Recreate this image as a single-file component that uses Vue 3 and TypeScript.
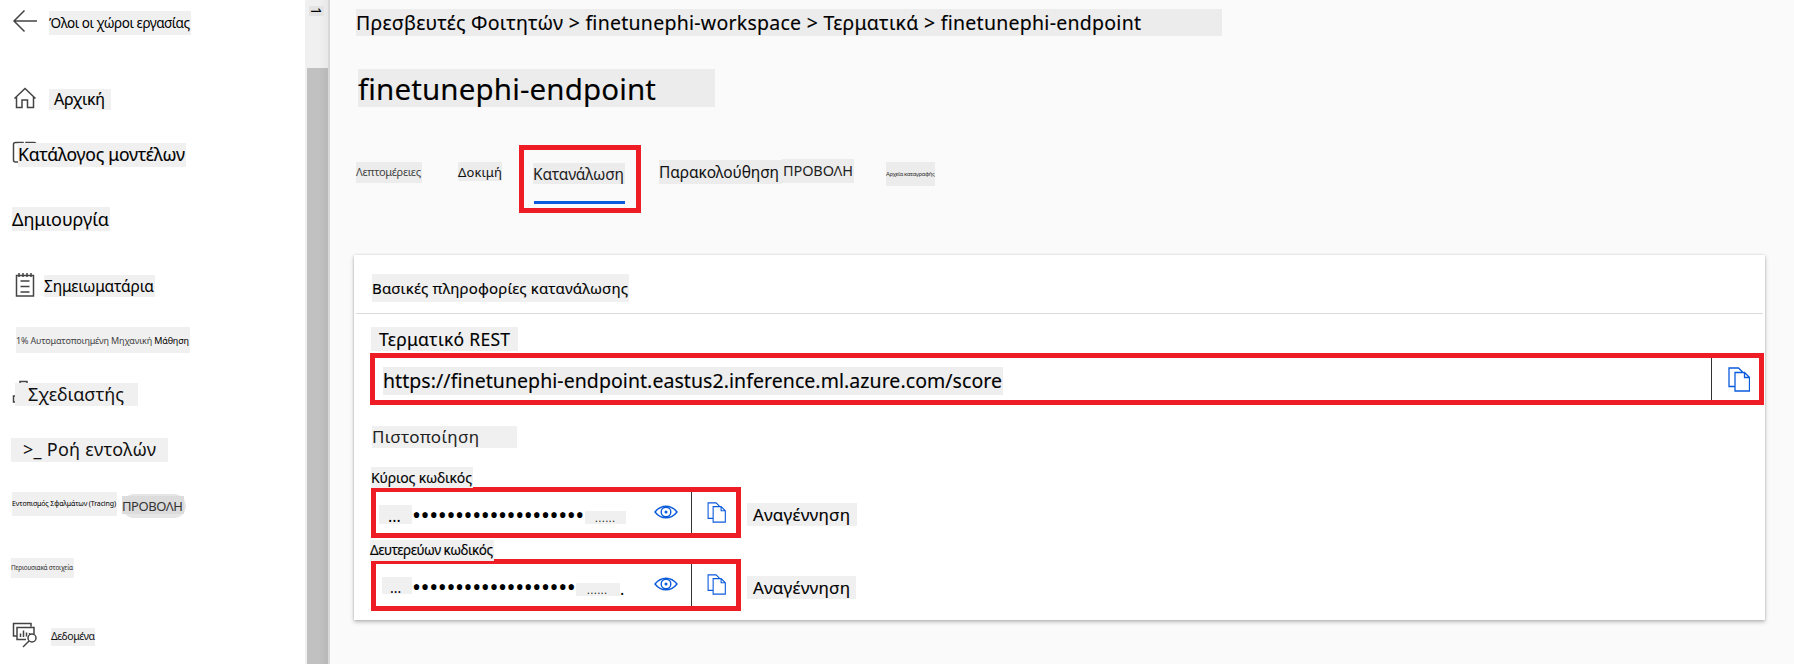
<script setup lang="ts">
import type { Directive } from 'vue'

// Spreads a line of text evenly over the given width in pixels.
const vFit: Directive<HTMLElement, number> = {
  mounted(el, { value }) {
    const natural = el.getBoundingClientRect().width
    const count = Array.from(el.textContent ?? '').length
    el.style.letterSpacing = `${(value - natural) / Math.max(count - 1, 1)}px`
  },
}

const mask = '•'.repeat(21)

interface Key {
  id: string
  label: string
  width: number
  regenWidth: number
}

const keys: Key[] = [
  { id: 'primary', label: 'Κύριος κωδικός', width: 101, regenWidth: 97 },
  { id: 'secondary', label: 'Δευτερεύων κωδικός', width: 123, regenWidth: 97 },
]
</script>

<template>
  <div class="app">
    <nav class="sidebar">
      <div class="row">
        <svg class="icon back" viewBox="0 0 26 24"><path d="M12.500 1.500 2 12l10.500 10.500M2 12h23" /></svg>
        <span class="tag t-all"><span v-fit="141">Όλοι οι χώροι εργασίας</span></span>
      </div>
      <div class="row">
        <svg class="icon home" viewBox="0 0 24 22"><path d="M1.500 11.500 12 1.500l10.500 10M3.500 10v10.500h5.500v-7.500h5.500v7.500h6V10" /></svg>
        <span class="tag t-home"><span v-fit="51">Αρχική</span></span>
      </div>
      <div class="row">
        <svg class="icon catalog" viewBox="0 0 26 24"><path d="M6 21H3.500Q1.500 21 1.500 19V3.500Q1.500 1.500 3.500 1.500H11V12M14 12V1.500H22Q24 1.500 24 3.500" /></svg>
        <span class="tag t-catalog"><span v-fit="167">Κατάλογος μοντέλων</span></span>
      </div>
      <div class="row"><span class="tag t-create"><span v-fit="97">Δημιουργία</span></span></div>
      <div class="row">
        <svg class="icon notebook" viewBox="0 0 20 26"><path d="M1.500 3.500h17v20.500h-17zM4 1v4M8 1v4M12 1v4M16 1v4M5.500 9h9M5.500 14.500h9M5.500 20h9" /></svg>
        <span class="tag t-notebook"><span v-fit="110">Σημειωματάρια</span></span>
      </div>
      <div class="row">
        <span class="tag t-automl"><span v-fit="173">1% Αυτοματοποιημένη Μηχανική <b>Μάθηση</b></span></span>
      </div>
      <div class="row">
        <svg class="icon designer" viewBox="0 0 26 26"><path d="M8 4V1.500h7V4M4 16H1.500v6H4" /></svg>
        <span class="tag t-designer"><span v-fit="96">Σχεδιαστής</span></span>
      </div>
      <div class="row"><span class="tag t-prompt"><span v-fit="133">&gt;_ Ροή εντολών</span></span></div>
      <div class="row">
        <span class="tag t-tracing"><span v-fit="104">Εντοπισμός Σφαλμάτων (Tracing)</span></span>
        <span class="pill"><span class="tag t-preview"><span v-fit="61">ΠΡΟΒΟΛΗ</span></span></span>
      </div>
      <div class="row"><span class="tag t-assets"><span v-fit="62">Περιουσιακά στοιχεία</span></span></div>
      <div class="row">
        <svg class="icon data" viewBox="0 0 26 26"><path d="M14 17.500H5V5.500h17V12M4.500 14H1.500V1.500h17.500v3M8.500 15v-3.500M11.500 15V8.500M14.500 14.500V10.500M17.500 12V11" /><circle cx="20" cy="16" r="4" /><path d="M17 19l-6 6" /></svg>
        <span class="tag t-data"><span v-fit="44">Δεδομένα</span></span>
      </div>
    </nav>

    <div class="scroll">
      <span class="scroll-top"><span>1</span></span>
      <div class="thumb"></div>
    </div>

    <main class="main">
      <div class="tag crumbs"><span v-fit="785">Πρεσβευτές Φοιτητών &gt; finetunephi-workspace &gt; Τερματικά &gt; finetunephi-endpoint</span></div>
      <h1 class="tag title"><span v-fit="298">finetunephi-endpoint</span></h1>

      <div class="tabs">
        <span class="tag tab-details"><span v-fit="65">Λεπτομέρειες</span></span>
        <span class="tag tab-test"><span v-fit="44">Δοκιμή</span></span>
        <div class="tab-active">
          <span class="tag tab-consume"><span v-fit="91">Κατανάλωση</span></span>
          <i class="underline"></i>
        </div>
        <span class="tag tab-monitor"><span v-fit="120">Παρακολούθηση</span></span>
        <span class="tag tab-preview"><span v-fit="70">ΠΡΟΒΟΛΗ</span></span>
        <span class="tag tab-logs"><span v-fit="49">Αρχεία καταγραφής</span></span>
      </div>

      <section class="card">
        <header class="card-head"><h2 class="tag head-text"><span v-fit="256">Βασικές πληροφορίες κατανάλωσης</span></h2></header>
        <div class="tag rest-label"><span v-fit="131">Τερματικό REST</span></div>
        <div class="field url-field">
          <span class="tag url"><span v-fit="619">https://finetunephi-endpoint.eastus2.inference.ml.azure.com/score</span></span>
          <span class="copy-cell">
            <svg class="copy" viewBox="0 0 22 25"><path d="M6.500 19.500H1V1h9.500l4 4M7 5.500h9.500l5 5V24H7zM16.500 5.500v5h5" /></svg>
          </span>
        </div>
        <div class="tag auth"><span v-fit="107">Πιστοποίηση</span></div>

        <div v-for="k in keys" :key="k.id" class="key" :class="k.id">
          <div class="tag key-label"><span v-fit="k.width">{{ k.label }}</span></div>
          <div class="key-row">
            <div class="field key-field">
              <span class="tag lead">...</span>
              <span class="dots"><span v-fit="181">{{ mask }}</span></span>
              <span class="tag trail"><span v-fit="20">......</span></span>
              <span class="stop"><template v-if="k.id === 'secondary'">.</template></span>
              <svg class="eye" viewBox="0 0 24 14"><path d="M1 7Q5.500 1.200 12 1.200T23 7Q18.500 12.800 12 12.800T1 7z" /><circle cx="12" cy="7" r="4.800" /><circle class="pupil" cx="12" cy="7" r="1.500" /></svg>
              <span class="copy-cell">
                <svg class="copy" viewBox="0 0 22 25"><path d="M6.500 19.500H1V1h9.500l4 4M7 5.500h9.500l5 5V24H7zM16.500 5.500v5h5" /></svg>
              </span>
            </div>
            <span class="tag regen"><span v-fit="k.regenWidth">Αναγέννηση</span></span>
          </div>
        </div>
      </section>
    </main>
  </div>
</template>

<style>
body {
  margin: 0;
  overflow: hidden;
}
</style>

<style scoped>
* {
  box-sizing: border-box;
}
.app {
  display: flex;
  width: 1794px;
  height: 664px;
  overflow: hidden;
  background: #fff;
  color: #000;
  font-family: 'Noto Sans', 'Open Sans', sans-serif;
}

/* --w/--h: box, --p: text inset, --fs: font size, --b: baseline inside the box */
.tag {
  --p: 0px;
  display: block;
  flex: none;
  width: var(--w);
  height: var(--h);
  margin: 0;
  padding-left: var(--p);
  background: #f0f0f0;
  font-size: var(--fs);
  font-weight: 400;
  line-height: calc((var(--b) - 0.388 * var(--fs)) * 2);
  white-space: nowrap;
}
.tag > span {
  display: inline-block;
}
.crumbs,
.title,
.url,
.t-home,
.t-catalog,
.rest-label,
.regen,
.key-label,
.head-text {
  -webkit-text-stroke: 0.12px currentColor;
}

/* sidebar */
.sidebar {
  flex: none;
  display: grid;
  grid-template-rows: 70px 55px 65px 65px 55px 60px 55px 55px 65px 65px 54px;
  width: 305px;
  height: 664px;
}
.row {
  display: flex;
  align-items: flex-start;
}
.icon {
  flex: none;
  fill: none;
  stroke: #444;
  stroke-width: 1.5;
}
.back { width: 26px; height: 24px; margin: 9px 0 0 12px; }
.home { width: 24px; height: 22px; margin: 17px 0 0 13px; }
.catalog { width: 26px; height: 24px; margin: 16px -21px 0 12px; }
.notebook { width: 20px; height: 26px; margin: 17px 0 0 15px; }
.designer { width: 26px; height: 26px; margin: 10px -23px 0 12px; }
.data { width: 26px; height: 26px; margin: 12px 0 0 12px; }

.t-all { --w: 142px; --h: 24px; --fs: 13.500px; --b: 18px; margin: 11px 0 0 11px; }
.t-home { --w: 62px; --h: 21px; --fs: 16px; --b: 17px; --p: 5px; margin: 19px 0 0 12px; }
.t-catalog { --w: 168px; --h: 24px; --fs: 17.500px; --b: 18.500px; position: relative; margin: 18px 0 0 1px; }
.t-create { --w: 98px; --h: 24px; --fs: 18px; --b: 19px; margin: 17px 0 0 12px; }
.t-notebook { --w: 111px; --h: 22px; --fs: 15.500px; --b: 18px; margin: 20px 0 0 9px; }
.t-automl { --w: 174px; --h: 26px; --fs: 9px; --b: 17px; margin: 17px 0 0 16px; color: #444; }
.t-automl b { color: #000; font-weight: 400; }
.t-designer { --w: 123px; --h: 23px; --fs: 18px; --b: 18.500px; --p: 13px; position: relative; margin: 13px 0 0; color: #111; }
.t-prompt { --w: 157px; --h: 24px; --fs: 18px; --b: 18.500px; --p: 12px; margin: 13px 0 0 11px; color: #111; }
.t-tracing { --w: 105px; --h: 24px; --fs: 7px; --b: 15px; margin: 12px 0 0 12px; }
.pill { flex: none; width: 64px; height: 24px; margin: 14px 0 0 5px; padding-top: 2px; border-radius: 12px; background: #e6e6e6; }
.t-preview { --w: 62px; --h: 18px; --fs: 13px; --b: 16px; background: #dcdcdc; color: #333; }
.t-assets { --w: 63px; --h: 20px; --fs: 6.500px; --b: 12.500px; margin: 13px 0 0 11px; color: #333; }
.t-data { --w: 44px; --h: 18px; --fs: 10.500px; --b: 13px; margin: 18px 0 0 13px; color: #111; }

/* scrollbar */
.scroll {
  flex: none;
  display: flex;
  flex-direction: column;
  width: 25px;
  height: 664px;
  padding: 6px 0 0 2px;
  border-right: 2px solid #d8d8d8;
  background: linear-gradient(to right, #f0f0f0 60%, #e8e8e8);
}
.scroll-top {
  display: flex;
  justify-content: center;
  align-items: center;
  width: 15px;
  height: 10px;
  margin: 0 0 52px 2px;
  background: #e3e3e3;
  font-size: 14px;
  line-height: 10px;
}
.scroll-top span {
  transform: rotate(90deg);
}
.thumb {
  flex: 1;
  background: linear-gradient(to right, #c1c1c1 60%, #b8b8b8);
}

/* main */
.main {
  flex: none;
  display: flex;
  flex-direction: column;
  width: 1464px;
  height: 664px;
  padding-left: 24px;
  background: #fafafa;
}
.main > .tag,
.tabs .tag {
  background: #ececec;
}
.crumbs { --w: 866px; --h: 27px; --fs: 19.500px; --b: 21.500px; margin: 9px 0 0 2px; }
.main > .title { --w: 357px; --h: 38px; --fs: 29.500px; --b: 31px; margin: 33px 0 0 4px; }

.tabs {
  display: flex;
  align-items: flex-start;
  height: 68px;
  margin: 38px 0 0 2px;
}
.tab-details { --w: 66px; --h: 21px; --fs: 11px; --b: 14px; margin-top: 17px; color: #444; }
.tab-test { --w: 44px; --h: 19px; --fs: 13px; --b: 15.500px; margin: 17px 0 0 36px; color: #111; }
.tab-active {
  width: 122px;
  height: 68px;
  margin-left: 17px;
  padding: 13px 0 0 9px;
  border: 5px solid #ee1c24;
}
.tab-consume { --w: 92px; --h: 21px; --fs: 15.500px; --b: 17.500px; color: #222; }
.underline {
  display: block;
  width: 91px;
  height: 3px;
  margin: 17px 0 0 1px;
  background: #0a5bdc;
}
.tab-monitor { --w: 123px; --h: 24px; --fs: 15.500px; --b: 19px; margin: 15px 0 0 18px; color: #111; }
.tab-preview { --w: 72px; --h: 24px; --fs: 14.500px; --b: 17.500px; --p: 1px; margin-top: 14px; color: #222; }
.tab-logs { --w: 49px; --h: 24px; --fs: 6px; --b: 14.500px; margin: 17px 0 0 32px; color: #333; }

.card {
  width: 1411px;
  height: 365px;
  margin-top: 42px;
  background: #fff;
  box-shadow: 0 2px 4px rgba(0, 0, 0, 0.26), 0 0 2px rgba(0, 0, 0, 0.14);
}
.card-head {
  height: 59px;
  margin: 0 2px;
  padding: 19px 0 0 16px;
  border-bottom: 1px solid #dadada;
}
.head-text { --w: 257px; --h: 28px; --fs: 15px; --b: 20px; }
.rest-label { --w: 147px; --h: 24px; --fs: 17.500px; --b: 19.500px; --p: 8px; margin: 13px 0 0 17px; }
.field {
  display: flex;
  align-items: flex-start;
  border: 5px solid #ee1c24;
  background: #fff;
}
.url-field {
  width: 1394px;
  height: 52px;
  margin: 2px 0 0 16px;
}
.url { --w: 620px; --h: 28px; --fs: 19.500px; --b: 21.500px; margin: 9px 0 0 8px; background: #eee; }
.copy-cell {
  flex: none;
  align-self: stretch;
  margin-left: auto;
  border-left: 1px solid #333;
}
.copy {
  display: block;
  fill: none;
  stroke: #0a5bdc;
  stroke-width: 1.3;
}
.url-field .copy-cell { width: 48px; padding: 9px 0 0 16px; }
.url-field .copy { width: 22px; height: 25px; }
.auth { --w: 145px; --h: 22px; --fs: 17px; --b: 18px; margin: 21px 0 0 18px; color: #222; }

.key {
  height: 72px;
  margin-left: 17px;
}
.key-label { position: relative; --h: 21px; --fs: 14px; --b: 16px; }
.key-row { display: flex; align-items: flex-start; }
.key-field { width: 370px; height: 52px; }
.primary { margin-top: 19px; }
.primary .key-label { --w: 102px; }
.primary .key-row { margin-top: -1px; }
.primary .key-field { height: 51px; }
.secondary { margin-top: 1px; }
.secondary .key-label { --w: 124px; --fs: 13.500px; margin-left: -1px; }
.secondary .key-row { margin-top: -2px; }

.lead { --w: 33px; --h: 19px; --fs: 16px; --b: 18px; --p: 9px; margin: 13px 0 0 3px; }
.secondary .lead { --w: 30px; --h: 17px; --fs: 14px; --b: 16.500px; --p: 8px; margin-left: 6px; }
.dots {
  flex: none;
  width: 173px;
  height: 41px;
  overflow: hidden;
  font-size: 24px;
  line-height: 46px;
  white-space: nowrap;
}
.secondary .dots { width: 164px; }
.trail { --w: 41px; --h: 13px; --fs: 10px; --b: 11.500px; --p: 10px; margin-top: 19px; color: #111; }
.secondary .trail { --w: 44px; --p: 11px; }
.stop {
  flex: none;
  width: 8px;
  font-size: 16px;
  line-height: 50px;
}
.eye {
  flex: none;
  width: 24px;
  height: 14px;
  margin: 13px 0 0 20px;
  fill: none;
  stroke: #0a5bdc;
  stroke-width: 1.4;
}
.secondary .eye { margin-left: 26px; }
.pupil { fill: #0a5bdc; stroke: none; }
.key-field .copy-cell { width: 45px; padding: 10px 0 0 15px; }
.key-field .copy { width: 19px; height: 21px; }
.regen { --w: 110px; --h: 23px; --fs: 17px; --b: 19px; --p: 6px; margin: 16px 0 0 6px; }
.secondary .regen { --w: 109px; --b: 18.500px; margin-top: 17px; }
</style>
